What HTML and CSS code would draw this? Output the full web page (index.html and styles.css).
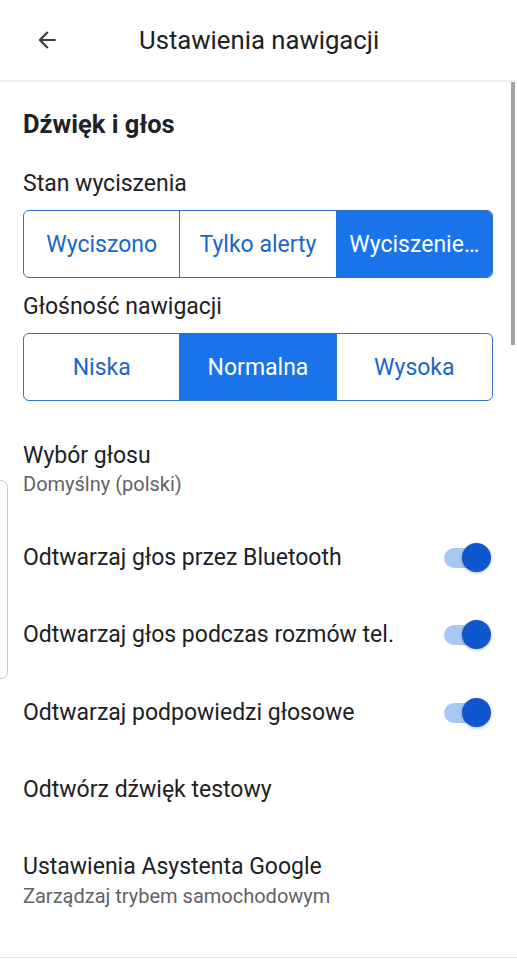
FILE: index.html
```html
<html>

<head>
    <meta charset="UTF-8">
    <title>Ustawienia nawigacji</title>
    <link rel="stylesheet" href="styles.css">
</head>

<body>
    <div class="topbar">
        <svg class="back" width="24" height="24" viewBox="0 0 24 24">
            <path d="M20 11H7.83l5.59-5.59L12 4l-8 8 8 8 1.41-1.41L7.83 13H20v-2z" fill="#3c4043"/>
        </svg>
        <span class="title">Ustawienia nawigacji</span>
    </div>

    <div class="content">
        <h2 class="section">Dźwięk i głos</h2>

        <div class="label">Stan wyciszenia</div>
        <div class="segmented">
            <div class="seg">Wyciszono</div>
            <div class="seg">Tylko alerty</div>
            <div class="seg active">Wyciszenie…</div>
        </div>

        <div class="label second">Głośność nawigacji</div>
        <div class="segmented">
            <div class="seg">Niska</div>
            <div class="seg active">Normalna</div>
            <div class="seg">Wysoka</div>
        </div>

        <div class="list">
            <div class="item double first">
                <div class="item_title">Wybór głosu</div>
                <div class="item_sub">Domyślny (polski)</div>
            </div>
            <div class="item">
                <div class="item_title">Odtwarzaj głos przez Bluetooth</div>
                <div class="toggle"><span class="knob"></span></div>
            </div>
            <div class="item">
                <div class="item_title">Odtwarzaj głos podczas rozmów tel.</div>
                <div class="toggle"><span class="knob"></span></div>
            </div>
            <div class="item">
                <div class="item_title">Odtwarzaj podpowiedzi głosowe</div>
                <div class="toggle"><span class="knob"></span></div>
            </div>
            <div class="item">
                <div class="item_title">Odtwórz dźwięk testowy</div>
            </div>
            <div class="item double last">
                <div class="item_title">Ustawienia Asystenta Google</div>
                <div class="item_sub">Zarządzaj trybem samochodowym</div>
            </div>
        </div>
    </div>

    <div class="scrollbar"></div>
    <div class="edge_handle"></div>
    <div class="bottom_line"></div>
</body>

</html>
```

FILE: styles.css
```css
body {
    margin: 0;
    width: 517px;
    height: 960px;
    overflow: hidden;
    background: #ffffff;
    font-family: Roboto, "Noto Sans", sans-serif;
    color: #202124;
    position: relative;
}

.topbar {
    height: 80px;
    display: flex;
    align-items: center;
    box-shadow: 0 1px 3px rgba(0, 0, 0, 0.12);
    position: relative;
}

.back {
    margin-left: 34px;
    margin-right: 79px;
    width: 26px;
    height: 26px;
}

.title {
    font-size: 25.7px;
    color: #202124;
}

.content {
    padding: 30px 24px 0 23px;
}

h2.section {
    margin: 0;
    font-size: 25.5px;
    line-height: 28px;
    font-weight: 700;
}

.label {
    margin-top: 32px;
    font-size: 23px;
    line-height: 28px;
}

.label.second {
    margin-top: 15px;
}

.segmented {
    margin-top: 12px;
    display: flex;
    height: 68px;
    border: 1.5px solid #2f6fc6;
    border-radius: 6px;
    overflow: hidden;
    box-sizing: border-box;
}

.seg {
    flex: 1;
    display: flex;
    align-items: center;
    justify-content: center;
    font-size: 23px;
    color: #1a66cc;
    border-left: 1.5px solid #2f6fc6;
    white-space: nowrap;
}

.seg:first-child {
    border-left: none;
}

.seg.active {
    background: #1a73e8;
    color: #ffffff;
    border-left-color: #1a73e8;
}

.list {
    margin-top: 29px;
}

.item {
    height: 77.5px;
    display: flex;
    align-items: center;
    justify-content: space-between;
}

.item.double {
    height: 98px;
    flex-direction: column;
    align-items: flex-start;
    justify-content: flex-start;
    box-sizing: border-box;
}

.item.first {
    height: 89px;
    padding-top: 12px;
}

.item.last {
    padding-top: 24px;
}

.item.last .item_sub {
    margin-top: 1px;
}

.item_title {
    font-size: 23px;
    line-height: 28px;
}

.item_sub {
    font-size: 20px;
    line-height: 28px;
    color: #5f6368;
}

.toggle {
    width: 46px;
    height: 20px;
    border-radius: 10px;
    background: #aac6f2;
    position: relative;
    margin-right: 3px;
}

.knob {
    position: absolute;
    right: -1px;
    top: -5px;
    width: 29px;
    height: 29px;
    border-radius: 50%;
    background: #0f57cf;
    box-shadow: 0 1px 3px rgba(0, 0, 0, 0.3);
}

.scrollbar {
    position: absolute;
    left: 511px;
    top: 82px;
    width: 4px;
    height: 263px;
    background: #a4a4a4;
}

.edge_handle {
    position: absolute;
    left: -10px;
    top: 480px;
    width: 16px;
    height: 197px;
    border: 1px solid #c8c8c8;
    border-radius: 7px;
}

.bottom_line {
    position: absolute;
    left: 0;
    top: 957px;
    width: 517px;
    height: 1px;
    background: #e8e8e8;
}
```
